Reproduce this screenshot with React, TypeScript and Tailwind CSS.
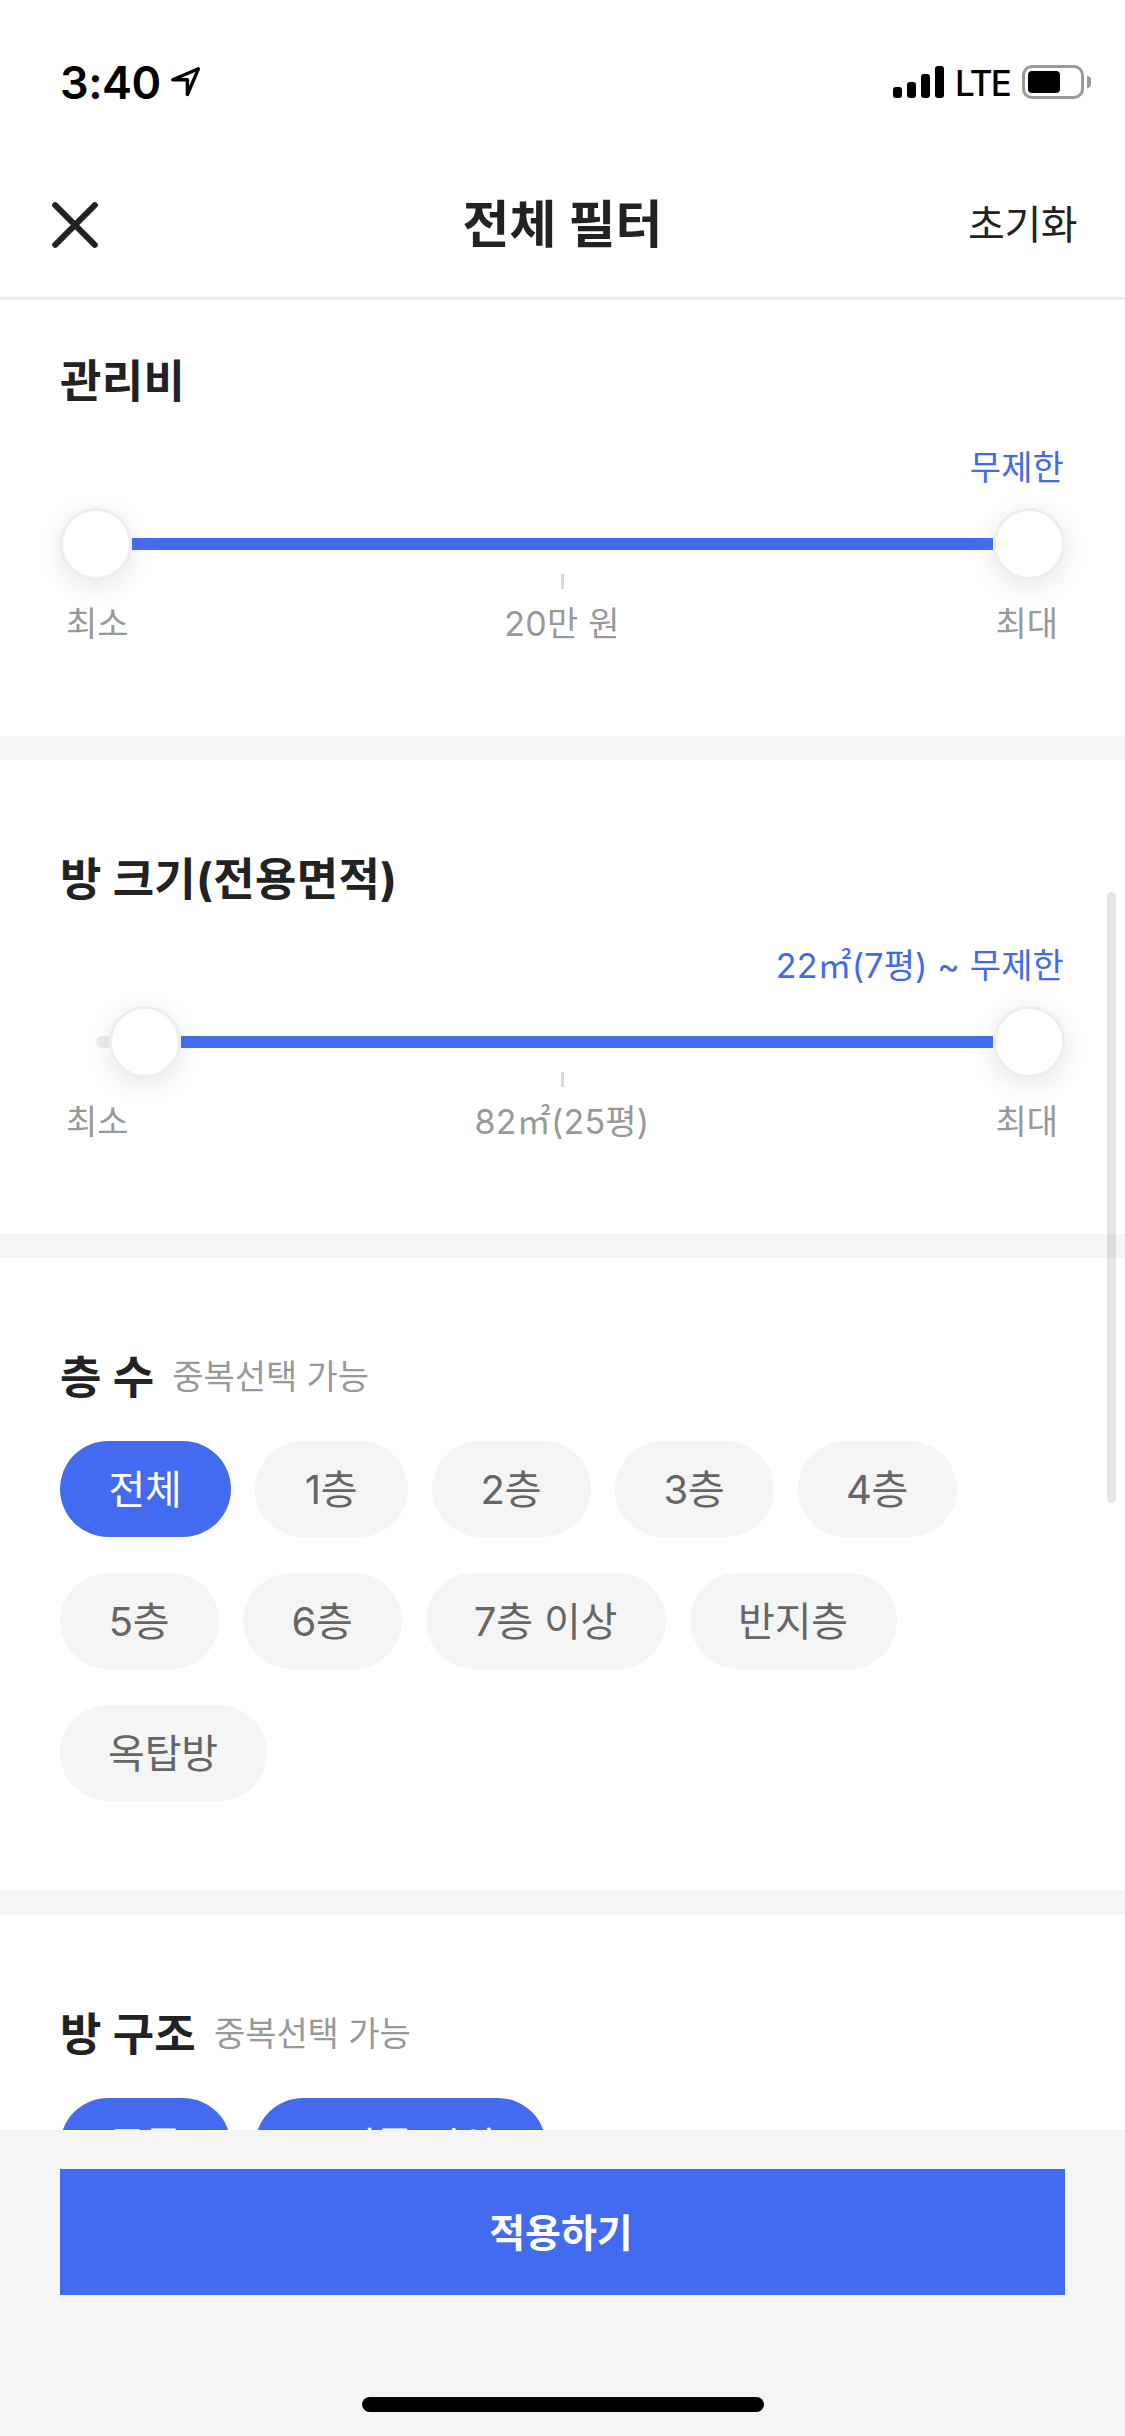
import React, { useState } from 'react';

interface RangeSliderProps {
  value: string;
  middle: string;
  offset?: number;
}

interface ChipOption {
  label: string;
  width: string;
}

const FLOORS: ChipOption[] = [
  { label: '전체', width: 'w-[171px]' },
  { label: '1층', width: 'w-[153px]' },
  { label: '2층', width: 'w-[159px]' },
  { label: '3층', width: 'w-[159px]' },
  { label: '4층', width: 'w-[159px]' },
  { label: '5층', width: 'w-[159px]' },
  { label: '6층', width: 'w-[159px]' },
  { label: '7층 이상', width: 'w-[240px]' },
  { label: '반지층', width: 'w-[207px]' },
  { label: '옥탑방', width: 'w-[207px]' },
];

const ROOMS: ChipOption[] = [
  { label: '투룸', width: 'w-[171px]' },
  { label: '쓰리룸 이상', width: 'w-[291px]' },
];

const StatusBar: React.FC = () => (
  <div className="flex h-[150px] shrink-0 items-start justify-between pl-[60px] pr-[34px] pt-[58px] text-black">
    <div className="flex h-12 items-center">
      <span className="pt-px text-[45px] font-semibold leading-[48px] tracking-[-0.5px]">3:40</span>
      <svg className="ml-[9px]" width="32" height="32" viewBox="0 0 32 32" fill="none">
        <path
          d="M28.4 2.8 L2.8 13.8 H17.4 V28.6 Z"
          stroke="currentColor"
          strokeWidth="3.4"
          strokeLinejoin="round"
        />
      </svg>
    </div>
    <div className="flex h-12 items-center">
      <div className="flex items-end gap-[5px]">
        <div className="h-[11px] w-[9px] rounded-[3px] bg-black" />
        <div className="h-4 w-[9px] rounded-[3px] bg-black" />
        <div className="h-6 w-[9px] rounded-[3px] bg-black" />
        <div className="h-8 w-[9px] rounded-[3px] bg-black" />
      </div>
      <span className="ml-[11px] w-[67px] pt-[2px] text-[35px] font-medium leading-[48px] tracking-[-1.8px]">LTE</span>
      <div className="flex h-[34px] w-[62px] items-center rounded-[10px] border-[3px] border-[#9a9a9a] pl-[3px]">
        <div className="h-[22px] w-8 rounded-[4px] bg-black" />
      </div>
      <div className="ml-[3px] h-3 w-1 rounded-r-full bg-[#9a9a9a]" />
    </div>
  </div>
);

const Header: React.FC = () => (
  <header className="grid h-[150px] shrink-0 grid-cols-3 items-center border-b-[3px] border-[#eeeeee] px-[48px] pt-[3px] text-[#222222]">
    <button aria-label="닫기" className="pl-1">
      <svg width="46" height="46" viewBox="0 0 46 46" fill="none">
        <path d="M3.2 3.2 L42.8 42.8 M42.8 3.2 L3.2 42.8" stroke="currentColor" strokeWidth="6" strokeLinecap="round" />
      </svg>
    </button>
    <h1 className="text-center text-[51px] font-bold leading-[60px]">전체 필터</h1>
    <button className="text-right text-[40px] leading-[60px] tracking-[-0.5px]">초기화</button>
  </header>
);

const SectionTitle: React.FC<{ title: string; hint?: string }> = ({ title, hint }) => (
  <div className="flex h-[60px] items-center">
    <h2 className="pt-[3px] text-[45px] font-bold leading-[60px] tracking-[0.3px] text-[#222222]">{title}</h2>
    {hint && (
      <span className="ml-[18px] pt-px text-[34px] leading-[60px] tracking-[-0.1px] text-[#999999]">{hint}</span>
    )}
  </div>
);

const Knob: React.FC = () => (
  <div className="size-[72px] shrink-0 rounded-full border-[3px] border-[#eeeeee] bg-white shadow-[0_6px_30px_rgba(0,0,0,0.1)]" />
);

const RangeSlider: React.FC<RangeSliderProps> = ({ value, middle, offset = 0 }) => (
  <div>
    <p className="mt-[33px] h-12 pr-px text-right text-[34px] leading-[50px] tracking-[0.15px] text-[#426be8]">
      {value}
    </p>
    <div className="mt-[17px] flex h-[72px] items-center">
      {offset > 0 && (
        <div className="ml-9 h-3 shrink-0 rounded-l-full bg-[#eeeeee]" style={{ width: offset - 36 }} />
      )}
      <Knob />
      <div className="z-10 h-3 flex-1 bg-[#426bf0]" />
      <Knob />
    </div>
    <div className="-mt-[6px] flex h-[15px] justify-center">
      <div className="w-[3px] bg-[#d8d8d8]" />
    </div>
    <div className="mt-[10px] grid h-12 grid-cols-3 pl-[6px] pr-[7px] text-[34px] leading-[49px] text-[#999999]">
      <span>최소</span>
      <span className="text-center tracking-[0.2px]">{middle}</span>
      <span className="text-right">최대</span>
    </div>
  </div>
);

const ChipGroup: React.FC<{ options: ChipOption[]; initial: string[] }> = ({ options, initial }) => {
  const [selected, setSelected] = useState(initial);

  const handleToggle = (label: string) => {
    setSelected((prev) => (prev.includes(label) ? prev.filter((item) => item !== label) : [...prev, label]));
  };

  return (
    <div className="mt-[35px] flex flex-wrap gap-x-6 gap-y-9">
      {options.map(({ label, width }) => (
        <button
          key={label}
          onClick={() => handleToggle(label)}
          className={`h-24 whitespace-nowrap rounded-full pr-px text-center text-[40px] leading-[97px] tracking-[-0.2px] ${width} ${
            selected.includes(label) ? 'bg-[#426bf0] text-white' : 'bg-[#f5f5f5] text-[#666666]'
          }`}
        >
          {label}
        </button>
      ))}
    </div>
  );
};

const App: React.FC = () => {
  return (
    <div className="relative flex h-[2436px] w-[1125px] flex-col overflow-hidden bg-white font-['Inter','Noto_Sans_CJK_KR',sans-serif]">
      <StatusBar />
      <Header />

      <main className="h-[1830px] shrink-0 overflow-hidden">
        <section className="h-[460px] border-b-[24px] border-[#f5f5f5] px-[60px] pt-[50px]">
          <SectionTitle title="관리비" />
          <RangeSlider value="무제한" middle="20만 원" />
        </section>
        <section className="h-[498px] border-b-[24px] border-[#f5f5f5] px-[60px] pt-[88px]">
          <SectionTitle title="방 크기(전용면적)" />
          <RangeSlider value="22㎡(7평) ~ 무제한" middle="82㎡(25평)" offset={49} />
        </section>
        <section className="h-[657px] border-b-[24px] border-[#f5f5f5] px-[60px] pt-[88px]">
          <SectionTitle title="층 수" hint="중복선택 가능" />
          <ChipGroup options={FLOORS} initial={['전체']} />
        </section>
        <section className="px-[60px] pt-[88px]">
          <SectionTitle title="방 구조" hint="중복선택 가능" />
          <ChipGroup options={ROOMS} initial={['투룸', '쓰리룸 이상']} />
        </section>
      </main>

      <footer className="flex flex-1 flex-col items-center bg-[#f5f5f5] px-[60px] pt-[39px]">
        <button className="h-[126px] w-full bg-[#426bf0] pr-[3px] text-[39px] font-bold leading-[127px] text-white">
          적용하기
        </button>
        <div className="mt-[102px] h-[15px] w-[402px] rounded-full bg-black" />
      </footer>

      {/* scroll indicator */}
      <div className="absolute right-[9px] top-[892px] h-[611px] w-[9px] rounded-full bg-black/10" />
    </div>
  );
};

export default App;
